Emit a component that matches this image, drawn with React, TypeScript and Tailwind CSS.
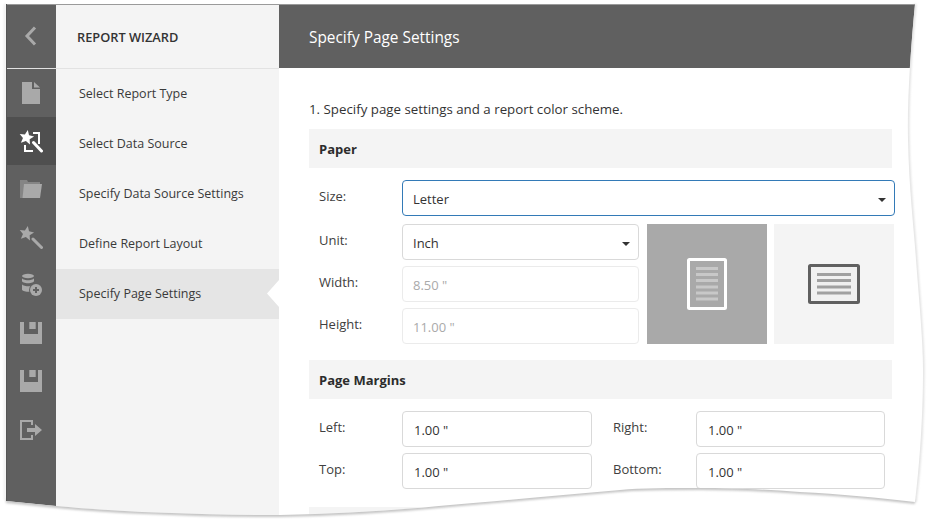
const sideItems = [
  "Select Report Type",
  "Select Data Source",
  "Specify Data Source Settings",
  "Define Report Layout",
  "Specify Page Settings",
];

const STAR = "7.5,0 9.6,4.8 14.8,5.2 10.9,8.6 12.1,13.7 7.5,11 2.9,13.7 4.1,8.6 0.2,5.2 5.4,4.8";

// page outline with the torn right and bottom edges
const RIGHT_EDGE =
  "M915 4C911 45 907 100 908 140C909 190 914 230 916 260C919 300 923 340 923 370C923 420 919 470 915 502";
const BOTTOM_EDGE =
  "M915 502C880 498 840 494 800 492C760 489 730 488 700 488C670 488 640 488 620 490C560 495 500 501 450 505" +
  "C400 510 340 514 280 515C200 515 120 512 56 506L6 501";
const SHEET =
  "M6 4L915 4C911 45 907 100 908 140C909 190 914 230 916 260C919 300 923 340 923 370C923 420 919 470 915 502" +
  "C880 498 840 494 800 492C760 489 730 488 700 488C670 488 640 488 620 490C560 495 500 501 450 505" +
  "C400 510 340 514 280 515C200 515 120 512 56 506L6 501Z";

function FileIcon() {
  return (
    <svg width="24" height="24" viewBox="0 0 24 24" fill="currentColor">
      <path d="M3 1H13V8H21V23H3Z" />
      <path d="M15 1L21 6.5H15Z" />
    </svg>
  );
}

function ActiveWizardIcon() {
  return (
    <svg width="24" height="24" viewBox="0 0 24 24" fill="none">
      <polygon points={STAR} fill="currentColor" transform="translate(0 1) rotate(10 7.5 7.5)" />
      <path d="M14 4H20V15M6 16V22H14" stroke="currentColor" strokeWidth="2" />
      <path d="M14.5 13.5L22.5 22" stroke="currentColor" strokeWidth="3" strokeLinecap="round" />
    </svg>
  );
}

function FolderIcon() {
  return (
    <svg width="24" height="24" viewBox="0 0 24 24">
      <path d="M1 3H8L9 5H21V7H6L4 21H1Z" fill="#858585" />
      <path d="M5 7H23L21 21H3.5Z" fill="#a9a9a9" />
    </svg>
  );
}

function WandIcon() {
  return (
    <svg width="24" height="24" viewBox="0 0 24 24" fill="none">
      <polygon points={STAR} fill="currentColor" transform="translate(0 1) rotate(10 7.5 7.5)" />
      <path d="M14 14L22.5 22.5" stroke="currentColor" strokeWidth="3" strokeLinecap="round" />
    </svg>
  );
}

function DataAddIcon() {
  return (
    <svg width="24" height="24" viewBox="0 0 24 24" fill="currentColor">
      <ellipse cx="9" cy="3" rx="6" ry="2.2" />
      <path d="M3 5v3c0 1.2 2.7 2.2 6 2.2s6-1 6-2.2V5c0 1.2-2.7 2.2-6 2.2S3 6.2 3 5z" />
      <path d="M3 11v5.5c0 1.2 2.7 2.2 6 2.2s6-1 6-2.2V11c0 1.2-2.7 2.2-6 2.2S3 12.2 3 11z" />
      <circle cx="17" cy="17" r="7" fill="#606060" />
      <circle cx="17" cy="17" r="6" />
      <path d="M17 14V20M14 17H20" stroke="#606060" strokeWidth="2" />
    </svg>
  );
}

function SaveIcon() {
  return (
    <svg width="24" height="24" viewBox="0 0 24 24" fill="currentColor">
      <path fillRule="evenodd" d="M1 1H23V23H1ZM5 1H10.3V8H16.7V1H19V13H5Z" />
    </svg>
  );
}

function ExitIcon() {
  return (
    <svg width="24" height="24" viewBox="0 0 24 24" fill="none">
      <path d="M13 8V4H2V22H13V18" stroke="currentColor" strokeWidth="2" />
      <path d="M8 11H16V7L23 13L16 19V15H8Z" fill="currentColor" />
    </svg>
  );
}

const railIcons = [FileIcon, ActiveWizardIcon, FolderIcon, WandIcon, DataAddIcon, SaveIcon, SaveIcon, ExitIcon];

function Caret() {
  return <div className="w-0 h-0 border-x-4 border-x-transparent border-t-4 border-t-[#333333]" />;
}

function Field({ value, width, disabled }: { value: string; width: string; disabled?: boolean }) {
  return (
    <div
      className={`${width} h-9 pt-[3px] flex items-center rounded border ${
        disabled ? "pl-[10px] border-[#ebebeb] text-[#aaaaaa]" : "pl-[11px] border-[#d9d9d9] text-[#333333]"
      }`}
    >
      {value}
    </div>
  );
}

function Row({ label, children }: { label: string; children: React.ReactNode }) {
  return (
    <div className="flex">
      <div className="w-[83px] ml-[10px] h-[34px] flex items-center text-[#404040]">{label}</div>
      {children}
    </div>
  );
}

function SectionBar({ title }: { title: string }) {
  return (
    <div className="w-[583px] h-[39px] pl-[10px] pt-0.5 flex items-center bg-[#f4f4f4] font-bold text-[#2c2c2c]">
      {title}
    </div>
  );
}

export default function App() {
  return (
    <div className="relative w-[929px] h-[523px] overflow-hidden bg-white pl-[6px] pt-[4px] font-['Open_Sans',sans-serif] text-[13px]">
      <div className="flex h-[519px] w-[923px]">
        {/* icon rail */}
        <div className="w-[50px] shrink-0 bg-[#606060] text-[#a9a9a9]">
          <div className="h-[64px] flex items-center justify-center">
            <svg width="14" height="22" viewBox="0 0 14 22" fill="none" stroke="currentColor" strokeWidth="3">
              <path d="M11 2.5L3 11L11 19.5" />
            </svg>
          </div>
          <div className="h-px bg-[#e2e2e2]" />
          {railIcons.map((Icon, i) => (
            <div
              key={i}
              className={`h-12 flex items-center justify-center ${i === 1 ? "bg-[#4f4f4f] text-white" : ""}`}
            >
              <Icon />
            </div>
          ))}
        </div>

        {/* steps */}
        <div className="w-[223px] shrink-0 bg-[#f4f4f4] text-[#3a3a3a]">
          <div className="h-[65px] pl-[21px] pt-1 flex items-center border-b border-[#e2e2e2] text-[12.8px] font-semibold text-[#333333]">
            REPORT WIZARD
          </div>
          {sideItems.map((item, i) => (
            <div
              key={item}
              className={`relative h-[50px] pl-[23px] flex items-center text-[12.5px] ${i === 4 ? "bg-[#e5e5e5]" : ""}`}
            >
              {item}
              {i === 4 && (
                <div className="absolute right-0 top-[11px] w-3 h-[27px] bg-white [clip-path:polygon(100%_0,0_50%,100%_100%)]" />
              )}
            </div>
          ))}
        </div>

        {/* page settings */}
        <div className="flex-1 min-w-0 text-[#333333]">
          <div className="h-16 pl-[30px] pt-1 flex items-center bg-[#606060] text-white text-[15.4px]">
            Specify Page Settings
          </div>
          <div className="pl-[30px]">
            <div className="h-[61px] pt-[31px] leading-[20px] text-[13.3px]">
              1. Specify page settings and a report color scheme.
            </div>
            <SectionBar title="Paper" />

            <div className="mt-3 flex flex-col">
              <Row label="Size:">
                <div className="w-[493px] h-9 pl-[10px] pr-2 pt-[3px] flex items-center justify-between rounded border border-[#337ab7]">
                  Letter
                  <Caret />
                </div>
              </Row>
              <div className="mt-2 flex">
                <div className="flex flex-col gap-[6px]">
                  <Row label="Unit:">
                    <div className="w-[237px] h-9 pl-[10px] pr-2 pt-[3px] flex items-center justify-between rounded border border-[#d9d9d9]">
                      Inch
                      <Caret />
                    </div>
                  </Row>
                  <Row label="Width:">
                    <Field value='8.50 "' width="w-[237px]" disabled />
                  </Row>
                  <Row label="Height:">
                    <Field value='11.00 "' width="w-[237px]" disabled />
                  </Row>
                </div>
                <div className="ml-2 w-[120px] h-[120px] flex items-center justify-center bg-[#a9a9a9]">
                  <svg width="40" height="52" viewBox="0 0 40 52">
                    <rect x="1.5" y="1.5" width="37" height="49" rx="1" fill="none" stroke="#ffffff" strokeWidth="3" />
                    <path d="M9 10.5H31M9 16.5H31M9 22.5H31M9 29H31M9 35H31M9 41H31" stroke="#c8c8c8" strokeWidth="3" />
                  </svg>
                </div>
                <div className="ml-[7px] w-[120px] h-[120px] flex items-center justify-center bg-[#f4f4f4]">
                  <svg width="52" height="40" viewBox="0 0 52 40">
                    <rect x="1.5" y="1.5" width="49" height="37" rx="1" fill="#f0f0f0" stroke="#606060" strokeWidth="3" />
                    <path d="M9 10.5H43M9 16.5H43M9 23H43M9 29H43" stroke="#a0a0a0" strokeWidth="3" />
                  </svg>
                </div>
              </div>
            </div>

            <div className="mt-4">
              <SectionBar title="Page Margins" />
            </div>
            <div className="mt-3 flex flex-col gap-[6px]">
              <div className="flex">
                <Row label="Left:">
                  <Field value='1.00 "' width="w-[190px]" />
                </Row>
                <div className="w-[83px] ml-[21px] h-[34px] flex items-center text-[#404040]">Right:</div>
                <Field value='1.00 "' width="w-[189px]" />
              </div>
              <div className="flex">
                <Row label="Top:">
                  <Field value='1.00 "' width="w-[190px]" />
                </Row>
                <div className="w-[83px] ml-[21px] h-[34px] flex items-center text-[#404040]">Bottom:</div>
                <Field value='1.00 "' width="w-[189px]" />
              </div>
            </div>
            <div className="mt-[18px] w-[583px] h-[39px] bg-[#f4f4f4]" />
          </div>
        </div>
      </div>

      {/* torn paper edge laid over the window */}
      <svg className="absolute inset-0 pointer-events-none" width="929" height="523" viewBox="0 0 929 523">
        <defs>
          <filter id="soft" x="-5%" y="-5%" width="110%" height="110%">
            <feGaussianBlur stdDeviation="0.8" />
          </filter>
          <clipPath id="outside">
            <path clipRule="evenodd" d={`M0 0H929V523H0Z${SHEET}`} />
          </clipPath>
        </defs>
        <path fillRule="evenodd" fill="#ffffff" d={`M0 0H929V523H0Z${SHEET}`} />
        <g clipPath="url(#outside)" fill="none" filter="url(#soft)">
          <path d={RIGHT_EDGE} stroke="#e0e0e0" strokeWidth="3" />
          <path d={BOTTOM_EDGE} stroke="#c4c4c4" strokeWidth="4" />
          <path d="M5 4V500" stroke="#e4e4e4" strokeWidth="1.5" />
        </g>
        <path d="M6 4.5H915" stroke="#9a9a9a" strokeWidth="1" />
        <path d="M6.5 4V501" stroke="#555555" strokeWidth="1" />
      </svg>
    </div>
  );
}
